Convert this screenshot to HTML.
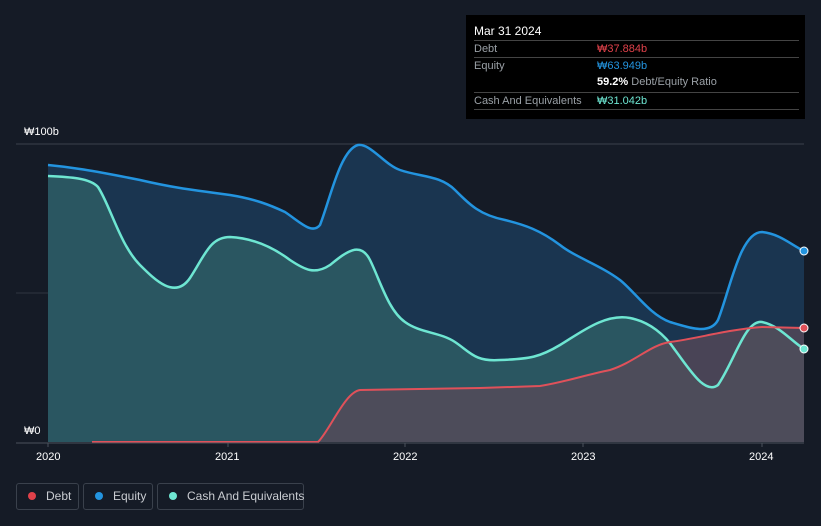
<!DOCTYPE html>
<html><head><meta charset="utf-8"><style>
body{margin:0;width:821px;height:526px;background:#151b26;font-family:"Liberation Sans",sans-serif;overflow:hidden;position:relative}
.tt{position:absolute;left:466px;top:15px;width:339px;height:104px;background:#000;color:#fff;font-size:11px}
.row{position:absolute;left:8px;right:6px;border-top:1px solid #444;height:17px;line-height:17px;color:#9aa0a6}
.v{position:absolute;left:123px}
.leg{position:absolute;top:483px;height:27px;border:1px solid #3a414c;border-radius:3px;color:#c9ccd1;font-size:12px;line-height:25px;box-sizing:border-box;white-space:nowrap}
.dot{display:inline-block;width:8px;height:8px;border-radius:50%;margin:0 10px 0 11px;vertical-align:0}
.ax{position:absolute;color:#fff;font-size:11px}
</style></head><body>
<svg width="821" height="526" style="position:absolute;left:0;top:0">
<line x1="16" y1="144" x2="804" y2="144" stroke="#3a414c"/>
<line x1="16" y1="293" x2="804" y2="293" stroke="#2e3540"/>
<path d="M48,165 C70,167 90,170 140,180 C170,187 185,189 230,195 C255,199 270,205 285,212 C300,222 312,235 320,225 C330,200 340,150 358,145 C370,143 385,165 400,170 C420,177 440,175 455,190 C470,205 480,215 505,220 C525,225 540,230 560,245 C575,257 600,265 620,280 C635,292 650,315 670,322 C690,328 710,335 718,320 C730,290 740,232 762,232 C780,234 790,244 804,251 L804,442 L48,442 Z" fill="#1a3550"/>
<path d="M48,176 C70,177 90,178 98,187 C110,205 120,245 140,265 C155,280 175,300 190,278 C205,255 210,237 230,237 C250,238 270,245 290,260 C305,270 315,275 330,265 C345,253 360,240 370,260 C380,280 388,310 405,322 C420,333 440,332 455,342 C470,352 475,362 500,360 C530,359 540,357 560,345 C580,333 605,313 630,318 C650,322 665,335 675,350 C690,370 705,395 718,385 C735,360 745,320 762,322 C780,326 790,340 804,349 L804,442 L48,442 Z" fill="#2c5a63" opacity="0.9"/>
<path d="M92,442 L318,442 C330,430 345,392 360,390 L480,388 L540,386 C565,382 585,375 610,370 C635,362 650,345 670,342 C700,338 725,330 762,327 L804,328 L804,442 Z" fill="#5a4a58" opacity="0.75"/>
<path d="M48,165 C70,167 90,170 140,180 C170,187 185,189 230,195 C255,199 270,205 285,212 C300,222 312,235 320,225 C330,200 340,150 358,145 C370,143 385,165 400,170 C420,177 440,175 455,190 C470,205 480,215 505,220 C525,225 540,230 560,245 C575,257 600,265 620,280 C635,292 650,315 670,322 C690,328 710,335 718,320 C730,290 740,232 762,232 C780,234 790,244 804,251" fill="none" stroke="#2394df" stroke-width="2.5"/>
<path d="M48,176 C70,177 90,178 98,187 C110,205 120,245 140,265 C155,280 175,300 190,278 C205,255 210,237 230,237 C250,238 270,245 290,260 C305,270 315,275 330,265 C345,253 360,240 370,260 C380,280 388,310 405,322 C420,333 440,332 455,342 C470,352 475,362 500,360 C530,359 540,357 560,345 C580,333 605,313 630,318 C650,322 665,335 675,350 C690,370 705,395 718,385 C735,360 745,320 762,322 C780,326 790,340 804,349" fill="none" stroke="#6ee6d2" stroke-width="2.5"/>
<path d="M92,442 L318,442 C330,430 345,392 360,390 L480,388 L540,386 C565,382 585,375 610,370 C635,362 650,345 670,342 C700,338 725,330 762,327 L804,328" fill="none" stroke="#e0515a" stroke-width="2"/>
<line x1="16" y1="443" x2="804" y2="443" stroke="#4a515c"/>
<g stroke="#4a515c"><line x1="48" y1="443" x2="48" y2="447"/><line x1="228" y1="443" x2="228" y2="447"/><line x1="405" y1="443" x2="405" y2="447"/><line x1="583" y1="443" x2="583" y2="447"/><line x1="762" y1="443" x2="762" y2="447"/></g>
<circle cx="804" cy="251" r="4" fill="#2394df" stroke="#fff"/>
<circle cx="804" cy="328" r="4" fill="#e0515a" stroke="#fff"/>
<circle cx="804" cy="349" r="4" fill="#6ee6d2" stroke="#fff"/>
</svg>
<div class="ax" style="left:24px;top:126px">₩100b</div>
<div class="ax" style="left:24px;top:425px">₩0</div>
<div class="ax" style="left:36px;top:451px">2020</div>
<div class="ax" style="left:215px;top:451px">2021</div>
<div class="ax" style="left:393px;top:451px">2022</div>
<div class="ax" style="left:571px;top:451px">2023</div>
<div class="ax" style="left:749px;top:451px">2024</div>
<div class="tt">
<div style="position:absolute;left:8px;top:9px;font-size:12px">Mar 31 2024</div>
<div class="row" style="top:25px">Debt<span class="v" style="color:#e0414a">₩37.884b</span></div>
<div class="row" style="top:42px">Equity<span class="v" style="color:#2394df">₩63.949b</span></div>
<div class="row" style="top:59px;border-top:none"><span class="v"><b style="color:#fff">59.2%</b> Debt/Equity Ratio</span></div>
<div class="row" style="top:77px">Cash And Equivalents<span class="v" style="color:#6ee6d2">₩31.042b</span></div>
<div class="row" style="top:94px;height:0"></div>
</div>
<div class="leg" style="left:16px;width:63px"><span class="dot" style="background:#e0414a"></span>Debt</div>
<div class="leg" style="left:83px;width:70px"><span class="dot" style="background:#2394df"></span>Equity</div>
<div class="leg" style="left:157px;width:147px"><span class="dot" style="background:#6ee6d2"></span>Cash And Equivalents</div>
</body></html>
